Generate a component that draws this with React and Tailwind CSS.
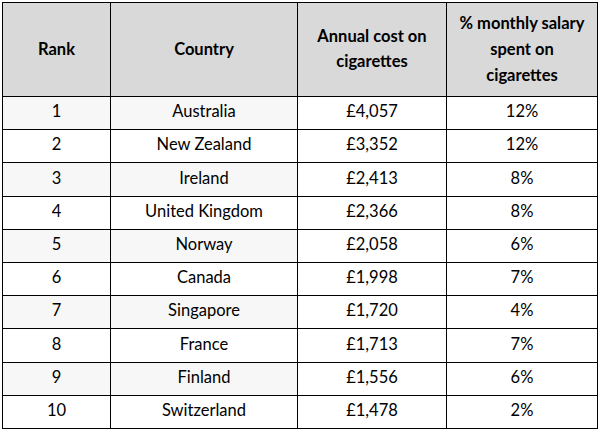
const rows = [
  ["1", "Australia", "£4,057", "12%"],
  ["2", "New Zealand", "£3,352", "12%"],
  ["3", "Ireland", "£2,413", "8%"],
  ["4", "United Kingdom", "£2,366", "8%"],
  ["5", "Norway", "£2,058", "6%"],
  ["6", "Canada", "£1,998", "7%"],
  ["7", "Singapore", "£1,720", "4%"],
  ["8", "France", "£1,713", "7%"],
  ["9", "Finland", "£1,556", "6%"],
  ["10", "Switzerland", "£1,478", "2%"],
];

export default function App() {
  return (
    <div className="w-[599px] h-[432px] bg-white pt-[2px] pl-[2px]" style={{ fontFamily: "Lato, 'Open Sans', sans-serif" }}>
      <table className="border-collapse text-[16.5px] text-black table-fixed w-[595px]">
        <colgroup>
          <col className="w-[108px]" />
          <col className="w-[187px]" />
          <col className="w-[149px]" />
          <col className="w-[151px]" />
        </colgroup>
        <thead>
          <tr className="h-[94px] bg-[#d9d9d9]">
            <th className="border border-black font-bold leading-[26px] text-center pb-[2px]">Rank</th>
            <th className="border border-black font-bold leading-[26px] text-center pb-[2px]">Country</th>
            <th className="border border-black font-bold leading-[25px] text-center px-2 pb-[1px]">Annual cost on cigarettes</th>
            <th className="border border-black font-bold leading-[26px] text-center px-2 pb-[2px]">% monthly salary spent on cigarettes</th>
          </tr>
        </thead>
        <tbody>
          {rows.map((r, i) => (
            <tr key={r[0]} className="h-[33.2px]">
              <td className={`border border-black text-center pb-[3px] ${i % 2 === 0 ? "bg-[#f7f7f7]" : "bg-white"}`}>{r[0]}</td>
              <td className={`border border-black text-center pb-[3px] ${i % 2 === 0 ? "bg-[#f7f7f7]" : "bg-white"}`}>{r[1]}</td>
              <td className="border border-black text-center bg-white pb-[3px]">{r[2]}</td>
              <td className="border border-black text-center bg-white pb-[3px]">{r[3]}</td>
            </tr>
          ))}
        </tbody>
      </table>
    </div>
  );
}
